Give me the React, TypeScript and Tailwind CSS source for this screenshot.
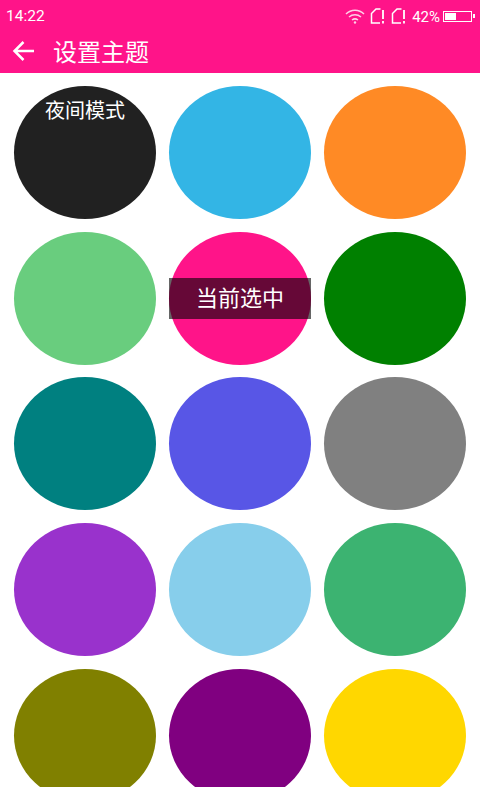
const rows = [
  ["#212121", "#33b5e5", "#ff8a25"],
  ["#69cd7e", "#ff1489", "#008000"],
  ["#008080", "#5856e6", "#808080"],
  ["#9932cc", "#87ceeb", "#3cb371"],
  ["#808000", "#800080", "#ffd700"],
];

function SimIcon() {
  return (
    <svg width="15" height="16" viewBox="0 0 15 16" fill="none" stroke="#fff" strokeWidth="1.500">
      <path d="M10 15H1.500V5.500L6 1h4.500" />
      <path d="M13 2v9M13 13v2.500" strokeWidth="1.800" />
    </svg>
  );
}

function StatusIcons() {
  return (
    <div className="flex items-center">
      <svg width="20" height="16" viewBox="0 0 20 16" fill="none" stroke="#fff" strokeWidth="1.500" className="mr-[5px] opacity-80">
        <path d="M1 6c5-5 13-5 18 0" />
        <path d="M4 9c3.500-3 8.500-3 12 0" />
        <path d="M7 12c2-1.500 4-1.500 6 0" />
        <circle cx="10" cy="14.500" r="1.200" fill="#fff" stroke="none" />
      </svg>
      <SimIcon />
      <div className="w-[6px]" />
      <SimIcon />
      <span className="text-[15px] leading-none ml-[6px] mr-[3px] mt-[2px]">42%</span>
      <div className="w-[29px] h-[11px] border border-white flex items-stretch p-[1px]">
        <div className="w-[11px] bg-white" />
      </div>
      <div className="w-[2px] h-[4px] bg-white ml-[1px]" />
    </div>
  );
}

export default function App() {
  return (
    <div className="w-[480px] h-[800px] bg-white overflow-hidden font-['Roboto','Noto_Sans_CJK_SC',sans-serif] text-white">
      <div className="h-[73px] bg-[#ff1489]">
        <div className="h-[32px] pl-[6px] pr-[5px] flex items-center justify-between">
          <span className="text-[15.500px] leading-none mt-[2px]">14:22</span>
          <StatusIcons />
        </div>
        <div className="h-[41px] flex items-center pl-[12px] pb-[3px]">
          <svg width="23" height="22" viewBox="0 0 23 22" fill="none" stroke="#fff" strokeWidth="2.500">
            <path d="M22 11H2.500M11.500 2 2.500 11l9 9" />
          </svg>
          <span className="ml-[18px] text-[24px] leading-none font-['Noto_Sans_CJK_SC',sans-serif]">设置主题</span>
        </div>
      </div>
      <div className="h-[714px] overflow-hidden px-[14px] pt-[13px] grid grid-cols-[142px_142px_142px] gap-x-[13px] gap-y-[12.650px] content-start">
        {rows.flat().map((color, i) => (
          <div
            key={i}
            className="relative h-[133px] rounded-[50%] flex justify-center font-['Noto_Sans_CJK_SC',sans-serif]"
            style={{ backgroundColor: color }}
          >
            {i === 0 && <span className="text-[20px] leading-none mt-[14px]">夜间模式</span>}
            {i === 4 && (
              <div className="absolute left-0 right-0 top-[46px] h-[41px] bg-black/60 flex items-center justify-center text-[22px] pb-[3px]">
                当前选中
              </div>
            )}
          </div>
        ))}
      </div>
    </div>
  );
}
